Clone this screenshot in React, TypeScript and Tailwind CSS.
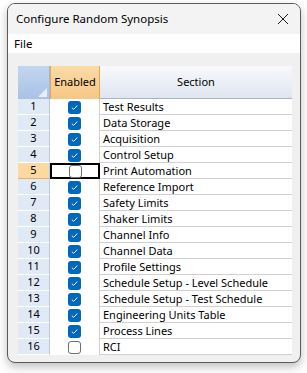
import React from "react";

const rows: [string, boolean][] = [
  ["Test Results", true],
  ["Data Storage", true],
  ["Acquisition", true],
  ["Control Setup", true],
  ["Print Automation", false],
  ["Reference Import", true],
  ["Safety Limits", true],
  ["Shaker Limits", true],
  ["Channel Info", true],
  ["Channel Data", true],
  ["Profile Settings", true],
  ["Schedule Setup - Level Schedule", true],
  ["Schedule Setup - Test Schedule", true],
  ["Engineering Units Table", true],
  ["Process Lines", true],
  ["RCI", false],
];

function Check({ on }: { on: boolean }) {
  if (!on)
    return <div className="w-[13px] h-[13px] rounded-[3px] border border-[#6e6e6e] bg-white" />;
  return (
    <div className="w-[13px] h-[13px] rounded-[3px] bg-[#0067c0] flex items-center justify-center">
      <svg width="9" height="9" viewBox="0 0 9 9">
        <path d="M1.8 4.6 L3.7 6.4 L7.2 2.6" fill="none" stroke="white" strokeWidth="1" />
      </svg>
    </div>
  );
}

export default function App() {
  return (
    <div className="w-[307px] h-[373px] bg-white relative" style={{ fontFamily: '"Noto Sans", "Open Sans", sans-serif' }}>
      <div className="absolute left-[7px] top-[3px] w-[294px] h-[360px] rounded-[8px] border border-[#5a5a5a] bg-[#f0f0f0] overflow-hidden flex flex-col shadow-[0_4px_10px_rgba(0,0,0,0.25)]">
        <div className="h-[30px] bg-[#f3f3f3] flex items-center justify-between pl-[8px] pr-[8px] shrink-0">
          <span className="text-[11.5px] text-black">Configure Random Synopsis</span>
          <svg width="12" height="12" viewBox="0 0 12 12" className="mr-[3px]">
            <path d="M1 1 L11 11 M11 1 L1 11" stroke="#1a1a1a" strokeWidth="1" />
          </svg>
        </div>
        <div className="h-[19px] bg-white flex items-center pl-[6px] shrink-0">
          <span className="text-[11.5px] text-black">File</span>
        </div>
        <div className="pt-[13px] pl-[10px]">
          <div className="w-[274px] bg-white flex flex-col text-[11px] text-black">
            <div className="flex h-[33px]">
              <div className="w-[32px] h-full bg-gradient-to-b from-[#c2d6f0] to-[#a8c2e6] relative border-r border-[#a0b8d8]">
                <div className="absolute right-[2px] bottom-[2px] w-0 h-0 border-l-[9px] border-l-transparent border-b-[9px] border-b-[#e8eef8]" />
              </div>
              <div className="w-[50px] h-full bg-gradient-to-b from-[#fbdba4] to-[#f6c786] border-l border-r border-[#e8a850] flex items-center justify-center">
                Enabled
              </div>
              <div className="flex-1 h-full bg-gradient-to-b from-[#f8f9fc] to-[#dfe5f0] border-b border-[#a8b4c8] flex items-center justify-center">
                Section
              </div>
            </div>
            {rows.map(([name, on], i) => {
              const sel = i === 4;
              return (
                <div key={i} className="flex h-[16px]">
                  <div
                    className={`w-[32px] h-full flex items-center justify-center border-b ${
                      sel ? "bg-[#fcd9a0] border-[#e8b070]" : "bg-[#e0e9f6] border-[#ffffff]"
                    } border-r border-r-[#b8c8e0]`}
                  >
                    {i + 1}
                  </div>
                  <div
                    className={`w-[50px] h-full flex items-center justify-center ${
                      sel ? "border-2 border-black" : "border-r border-[#d0d0d0]"
                    }`}
                  >
                    <Check on={on} />
                  </div>
                  <div className="flex-1 h-full flex items-center pl-[3px] border-b border-[#d0d0d0] leading-none">
                    {name}
                  </div>
                </div>
              );
            })}
          </div>
        </div>
      </div>
    </div>
  );
}
